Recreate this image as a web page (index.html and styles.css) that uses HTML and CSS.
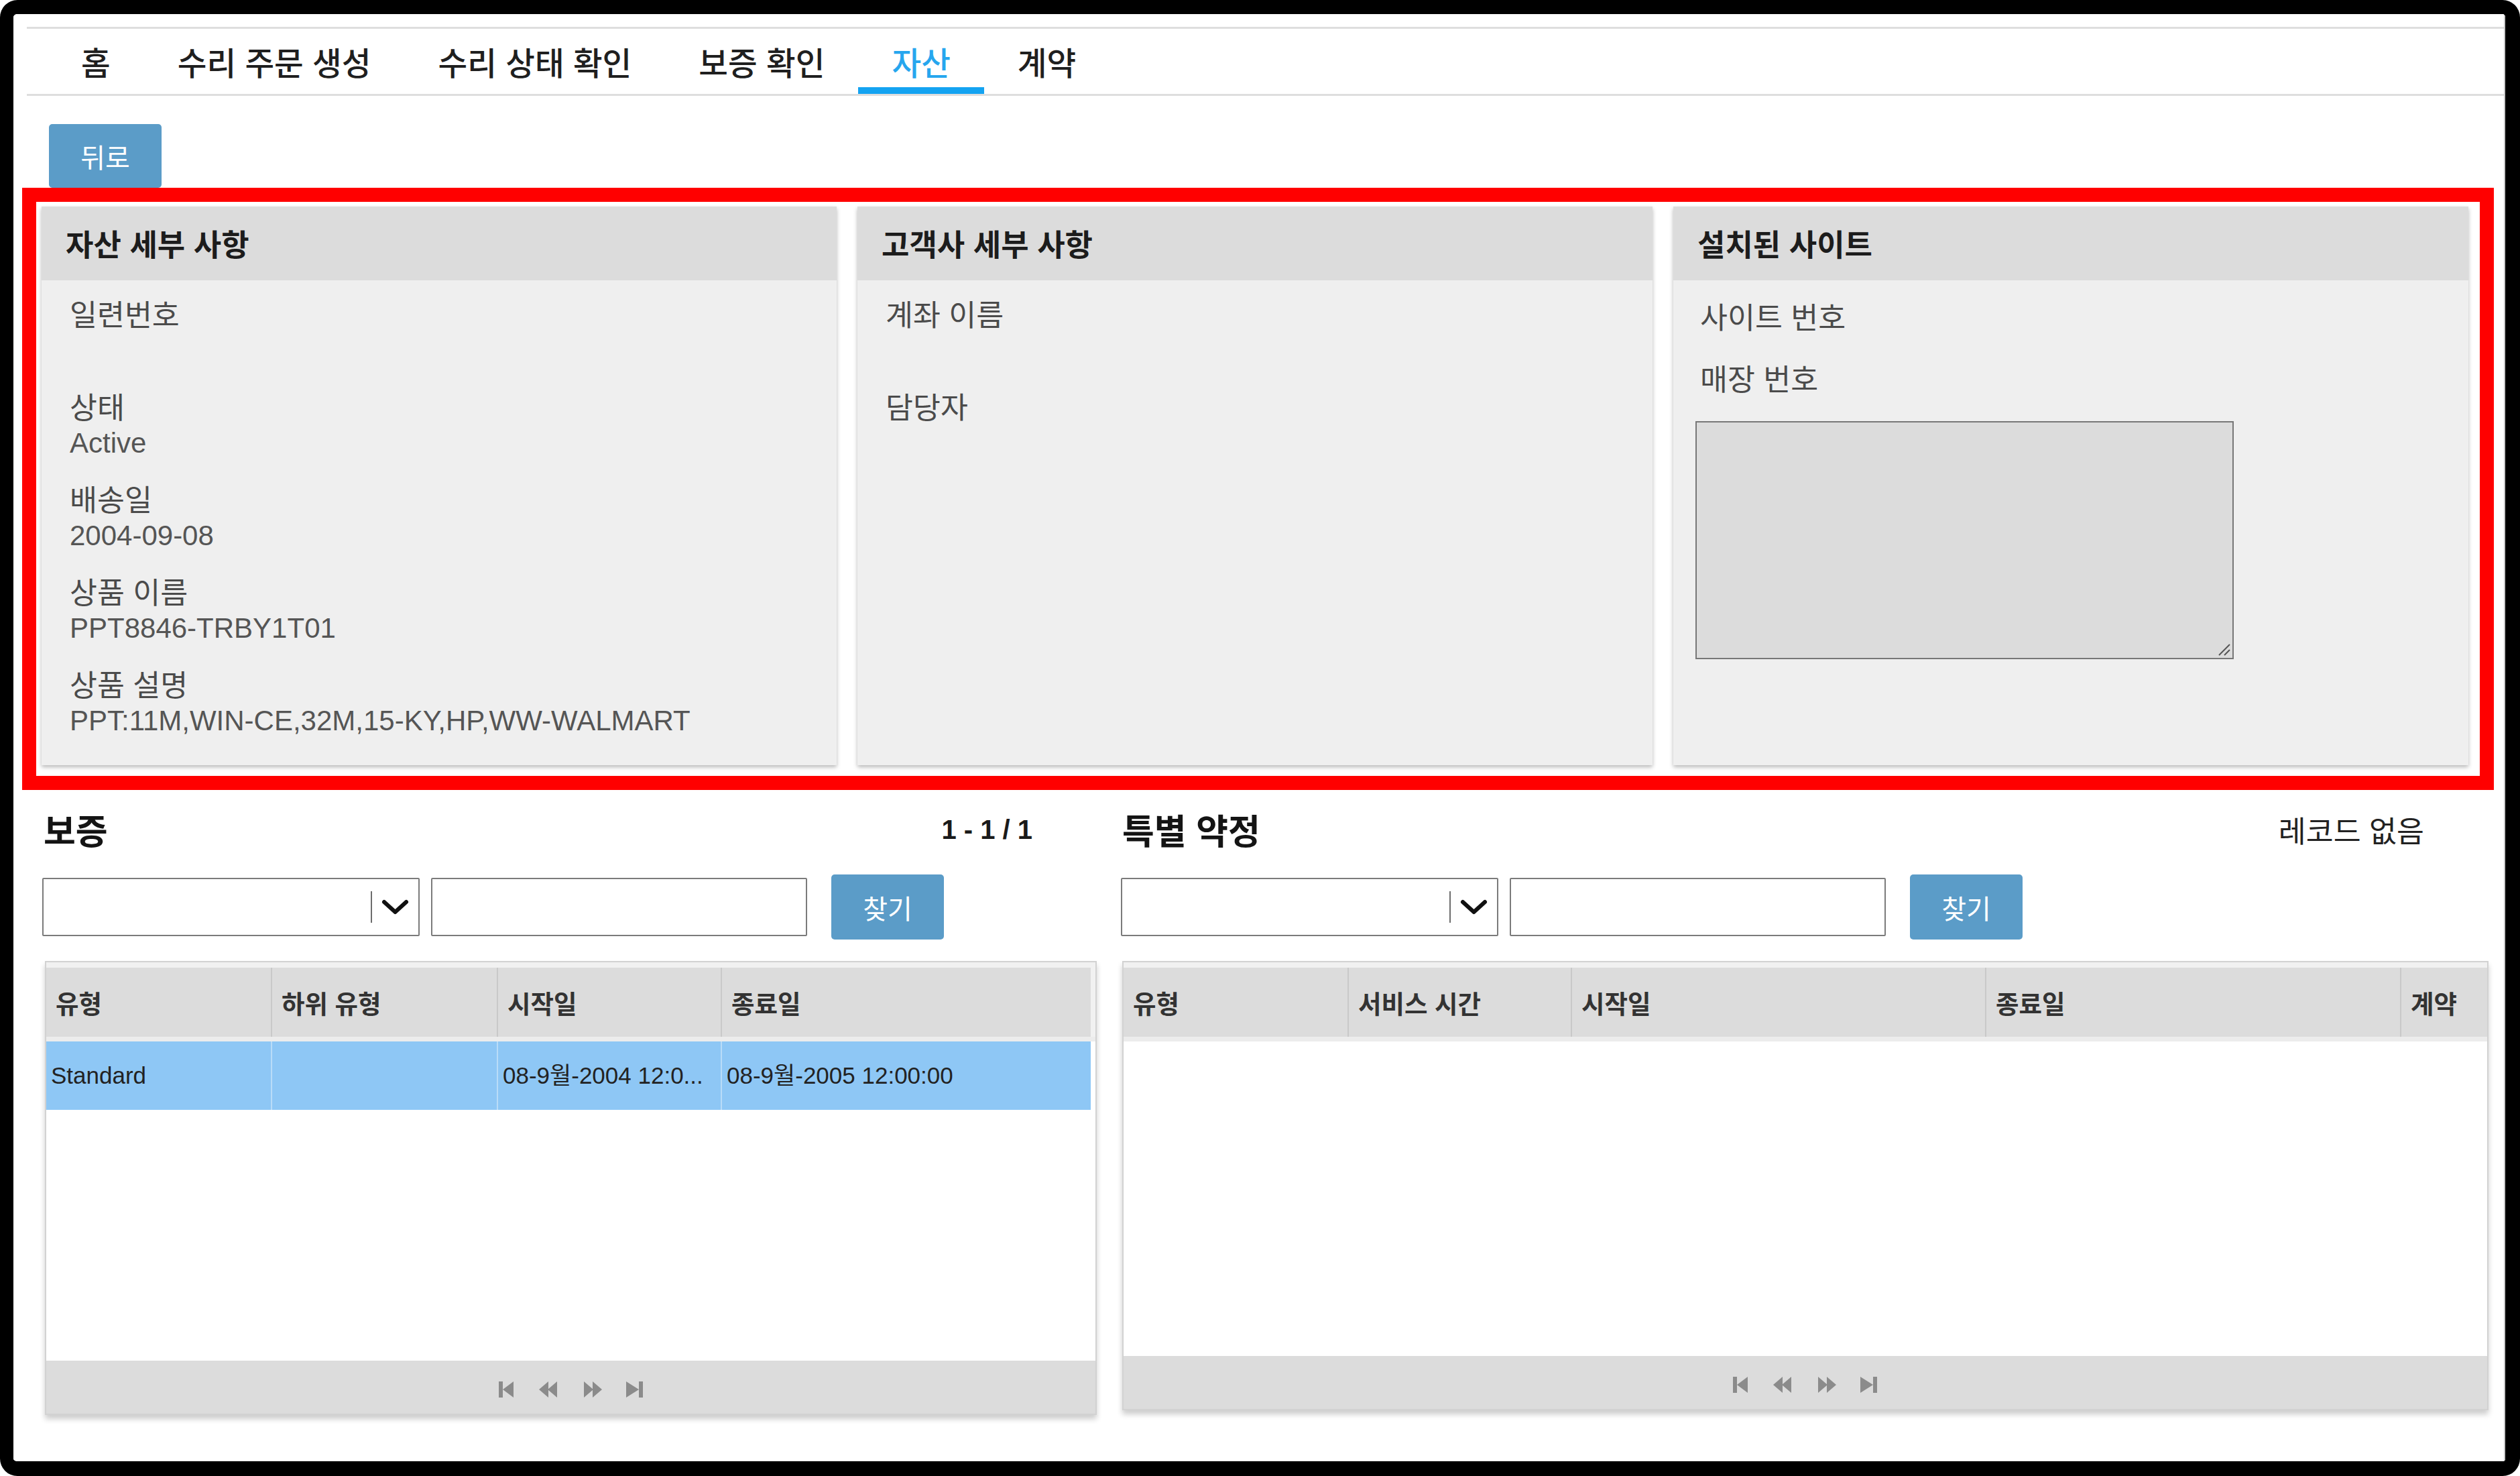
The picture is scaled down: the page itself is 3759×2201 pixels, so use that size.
FILE: index.html
```html
<!DOCTYPE html>
<html lang="ko">
<head>
<meta charset="utf-8">
<title>자산</title>
<link rel="stylesheet" href="styles.css">
</head>
<body>
<div class="frame">
  <div class="page">
    <nav class="tabs">
      <a class="tab">홈</a>
      <a class="tab">수리 주문 생성</a>
      <a class="tab">수리 상태 확인</a>
      <a class="tab">보증 확인</a>
      <a class="tab active">자산</a>
      <a class="tab">계약</a>
    </nav>

    <div class="toolbar"><button class="btn back">뒤로</button></div>

    <div class="highlight">
      <section class="panel">
        <h2 class="panel-title">자산 세부 사항</h2>
        <div class="panel-body">
          <div class="field"><div class="label">일련번호</div><div class="value"></div></div>
          <div class="field"><div class="label">상태</div><div class="value">Active</div></div>
          <div class="field"><div class="label">배송일</div><div class="value">2004-09-08</div></div>
          <div class="field"><div class="label">상품 이름</div><div class="value">PPT8846-TRBY1T01</div></div>
          <div class="field"><div class="label">상품 설명</div><div class="value">PPT:11M,WIN-CE,32M,15-KY,HP,WW-WALMART</div></div>
        </div>
      </section>
      <section class="panel">
        <h2 class="panel-title">고객사 세부 사항</h2>
        <div class="panel-body">
          <div class="field"><div class="label">계좌 이름</div><div class="value"></div></div>
          <div class="field"><div class="label">담당자</div><div class="value"></div></div>
        </div>
      </section>
      <section class="panel">
        <h2 class="panel-title">설치된 사이트</h2>
        <div class="panel-body site">
          <div class="label">사이트 번호</div>
          <div class="label">매장 번호</div>
          <div class="address-wrap">
            <textarea class="address"></textarea>
            <svg class="grip" width="24" height="24" viewBox="0 0 24 24"><path d="M22 6 L6 22 M22 14 L14 22" stroke="#555" stroke-width="2" fill="none"/></svg>
          </div>
        </div>
      </section>
    </div>

    <div class="lists">
      <section class="list list-warranty">
        <div class="list-head"><h3>보증</h3><span class="count">1 - 1 / 1</span></div>
        <div class="search">
          <div class="combo"><span class="divider"></span><svg class="chev" width="43" height="26" viewBox="0 0 43 26"><path d="M5 5 L21.5 20 L38 5" fill="none" stroke="#111" stroke-width="6" stroke-linecap="round" stroke-linejoin="round"/></svg></div>
          <div class="text-input"></div>
          <button class="btn find">찾기</button>
        </div>
        <div class="grid grid-warranty">
          <div class="grid-header cols-warranty">
            <div class="th">유형</div><div class="th">하위 유형</div><div class="th">시작일</div><div class="th">종료일</div><div class="th-fill"></div>
          </div>
          <div class="grid-body">
            <div class="tr selected cols-warranty">
              <div class="td">Standard</div><div class="td"></div><div class="td">08-9월-2004 12:0...</div><div class="td">08-9월-2005 12:00:00</div><div class="td-fill"></div>
            </div>
          </div>
          <div class="grid-footer">
            <svg class="pager" width="216" height="24" viewBox="0 0 216 24"><g fill="#8b8b8b"><rect x="0" y="0" width="6" height="24"/><polygon points="22,0 22,24 6,12"/><polygon points="74,0 74,24 60,12"/><polygon points="87,0 87,24 73,12"/><polygon points="127,0 141,12 127,24"/><polygon points="140,0 154,12 140,24"/><polygon points="190,0 209,12 190,24"/><rect x="209" y="0" width="6" height="24"/></g></svg>
          </div>
        </div>
      </section>

      <section class="list list-special">
        <div class="list-head"><h3>특별 약정</h3><span class="empty">레코드 없음</span></div>
        <div class="search">
          <div class="combo"><span class="divider"></span><svg class="chev" width="43" height="26" viewBox="0 0 43 26"><path d="M5 5 L21.5 20 L38 5" fill="none" stroke="#111" stroke-width="6" stroke-linecap="round" stroke-linejoin="round"/></svg></div>
          <div class="text-input"></div>
          <button class="btn find">찾기</button>
        </div>
        <div class="grid grid-special">
          <div class="grid-header cols-special">
            <div class="th">유형</div><div class="th">서비스 시간</div><div class="th">시작일</div><div class="th">종료일</div><div class="th">계약</div>
          </div>
          <div class="grid-body"></div>
          <div class="grid-footer">
            <svg class="pager" width="216" height="24" viewBox="0 0 216 24"><g fill="#8b8b8b"><rect x="0" y="0" width="6" height="24"/><polygon points="22,0 22,24 6,12"/><polygon points="74,0 74,24 60,12"/><polygon points="87,0 87,24 73,12"/><polygon points="127,0 141,12 127,24"/><polygon points="140,0 154,12 140,24"/><polygon points="190,0 209,12 190,24"/><rect x="209" y="0" width="6" height="24"/></g></svg>
          </div>
        </div>
      </section>
    </div>
  </div>
</div>
</body>
</html>
```

FILE: styles.css
```css
* { box-sizing: border-box; }
html, body { margin: 0; padding: 0; background: #fff; }
body { font-family: "Noto Sans CJK KR", "Liberation Sans", sans-serif; color: #222; }

.frame {
  width: 3759px;
  height: 2201px;
  border-style: solid;
  border-color: #000;
  border-width: 21px 22px 22px 20px;
  border-radius: 26px;
  overflow: hidden;
}
.page {
  height: 100%;
  background: #fff;
  border-right: 2px solid #c9c9c9;
  display: flex;
  flex-direction: column;
}

/* tabs */
.tabs {
  margin: 19px 0 0 20px;
  height: 103px;
  border-top: 3px solid #dedede;
  border-bottom: 3px solid #dedede;
  padding-left: 31px;
  display: flex;
}
.tab {
  padding: 0 50px;
  font-size: 47.5px;
  line-height: 97px;
  font-weight: 500;
  color: #1f1f1f;
  white-space: nowrap;
}
.tab.active {
  color: #26a6ee;
  box-shadow: inset 0 -10px 0 #14a3f1;
}

/* buttons */
.btn {
  border: none;
  border-radius: 5px;
  background: #5b9cc8;
  color: #fff;
  font-family: "Noto Sans CJK KR", sans-serif;
  font-size: 40px;
  padding: 0;
  margin: 0;
}
.toolbar { padding: 42px 0 0 53px; }
.btn.back { display: block; width: 168px; height: 95px; }

/* highlighted panels */
.highlight {
  margin-left: 13px;
  width: 3687px;
  border: 21px solid #ff0000;
  padding: 7px 18px 16px 8px;
  display: grid;
  grid-template-columns: repeat(3, 1186px);
  column-gap: 31px;
}
.panel {
  height: 833px;
  background: #efefef;
  box-shadow: 0 3px 6px rgba(0, 0, 0, 0.28);
}
.panel-title {
  margin: 0;
  height: 110px;
  background: #dcdcdc;
  padding-left: 36px;
  font-size: 45px;
  font-weight: 700;
  line-height: 110px;
  color: #1c1c1c;
}
.panel-body { padding: 21px 42px 0; }
.field { margin-bottom: 26px; }
.label {
  font-size: 44.5px;
  line-height: 56px;
  color: #4b4b4b;
  white-space: nowrap;
}
.value {
  font-family: "Liberation Sans", "Noto Sans CJK KR", sans-serif;
  font-size: 42px;
  line-height: 56px;
  min-height: 56px;
  color: #555;
  white-space: nowrap;
}
.panel-body.site {
  padding: 25px 40px 0 33px;
  display: flex;
  flex-direction: column;
  align-items: flex-start;
  row-gap: 36px;
}
.site .label { margin-left: 7px; }
.address-wrap {
  position: relative;
  margin-top: 1px;
}
.address {
  display: block;
  width: 803px;
  height: 355px;
  margin: 0;
  padding: 0;
  background: #dcdcdc;
  border: 2px solid #777;
  resize: none;
}
.grip {
  position: absolute;
  right: 4px;
  bottom: 4px;
}

/* lists */
.lists {
  display: flex;
  column-gap: 36px;
  padding: 0 25px 0 43px;
}
.list-warranty { width: 1573px; }
.list-special { width: 2040px; }
.list-head {
  margin-top: 28px;
  height: 62px;
  padding: 0 96px 0 2px;
  display: flex;
  justify-content: space-between;
  align-items: center;
}
.list-head h3 {
  margin: 0;
  font-size: 52px;
  font-weight: 700;
  line-height: 62px;
  color: #141414;
}
.count {
  font-family: "Liberation Sans", sans-serif;
  font-weight: 700;
  font-size: 40px;
  line-height: 62px;
  color: #1a1a1a;
}
.empty {
  font-size: 44.5px;
  line-height: 62px;
  color: #222;
}

.search {
  margin-top: 36px;
  height: 97px;
  display: flex;
  align-items: center;
}
.combo {
  width: 563px;
  height: 87px;
  border: 2px solid #7b7b7b;
  border-radius: 2px;
  background: #fff;
  display: flex;
  justify-content: flex-end;
  align-items: center;
  padding-right: 13px;
}
.divider {
  width: 2px;
  height: 47px;
  background: #6d6d6d;
  margin-right: 13px;
}
.chev { display: block; }
.text-input {
  width: 561px;
  height: 87px;
  margin-left: 17px;
  border: 2px solid #7b7b7b;
  border-radius: 2px;
  background: #fff;
}
.btn.find {
  width: 168px;
  height: 97px;
  margin-left: 36px;
}

/* grids */
.grid {
  margin-top: 32px;
  border: 2px solid #d2d2d2;
  background: #fff;
  box-shadow: 0 6px 8px rgba(0, 0, 0, 0.2);
  display: flex;
  flex-direction: column;
}
.grid-warranty { margin-left: 4px; width: 1569px; height: 677px; }
.grid-special { margin-left: 2px; width: 2038px; height: 670px; }

.cols-warranty { display: grid; grid-template-columns: 335px 337px 334px 552px 1fr; }
.cols-special { display: grid; grid-template-columns: 334px 333px 618px 619px 1fr; }

.grid-header {
  padding-top: 8px;
  background: #f1f1f1;
  border-bottom: 7px solid #ececec;
}
.th {
  height: 103px;
  background: #dcdcdc;
  padding-left: 14px;
  font-size: 37.5px;
  font-weight: 700;
  line-height: 103px;
  color: #333;
  white-space: nowrap;
  overflow: hidden;
  border-left: 2px solid #c9c9c9;
}
.th:first-child { border-left: none; }
.th-fill { background: #f1f1f1; }

.grid-body { flex: 1; }
.tr { height: 102px; }
.tr.selected .td { background: #8ec7f5; }
.td {
  padding-left: 7px;
  font-family: "Liberation Sans", "Noto Sans CJK KR", sans-serif;
  font-size: 35px;
  line-height: 102px;
  color: #222;
  white-space: nowrap;
  overflow: hidden;
  border-left: 2px solid #b9dcf8;
}
.td:first-child { border-left: none; }
.tr.selected .td-fill { background: #fff; }

.grid-footer {
  height: 79px;
  background: #dcdcdc;
  display: flex;
  justify-content: center;
  align-items: center;
  padding-top: 6px;
}
.pager { display: block; }
```
